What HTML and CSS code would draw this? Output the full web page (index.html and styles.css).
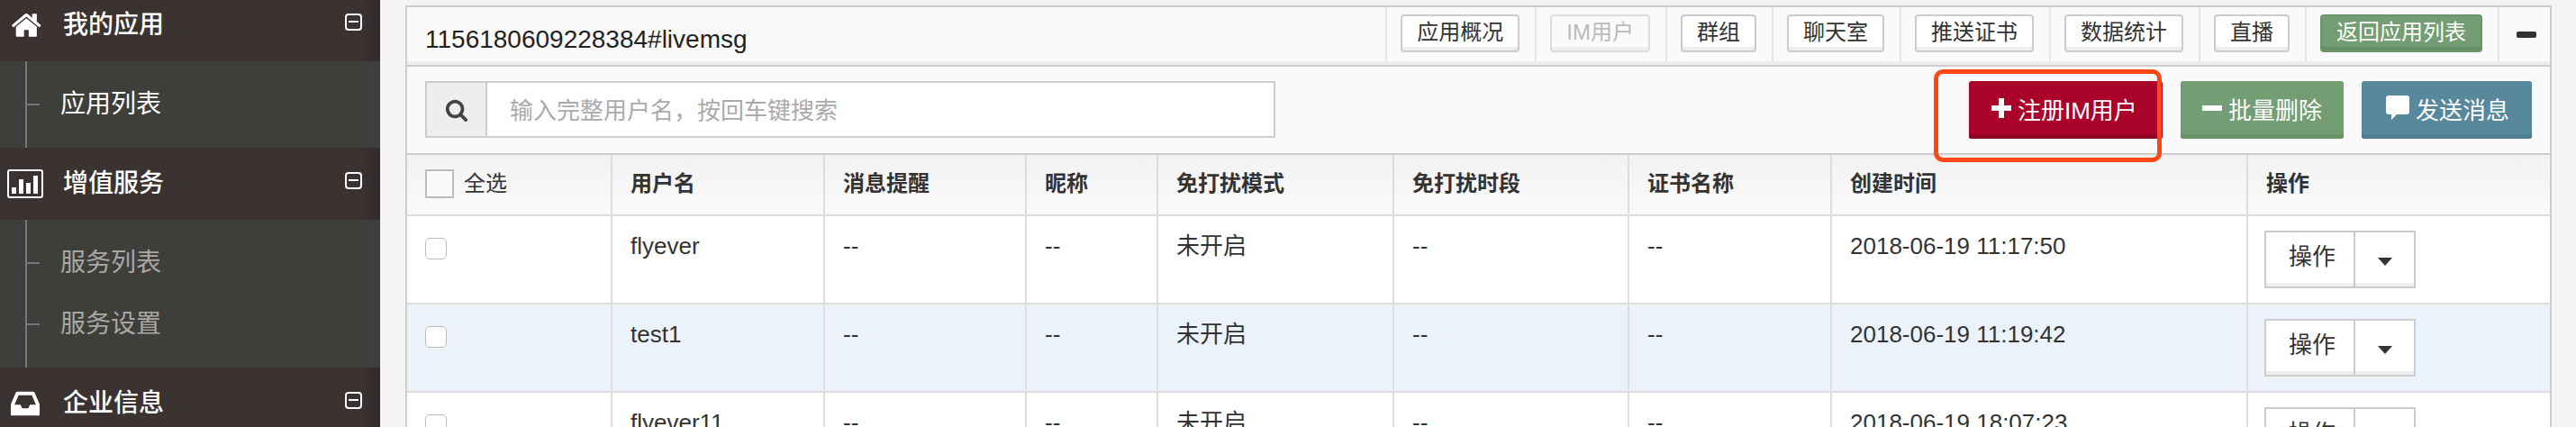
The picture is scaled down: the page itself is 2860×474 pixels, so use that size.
FILE: index.html
```html
<!DOCTYPE html>
<html>
<head>
    <title>IM用户</title>
    <link rel="stylesheet" href="styles.css">
</head>
<body>
    <div class="sidebar">
        <div class="navHead">
            <svg class="navIcon homeIcon" viewBox="0 0 1664 1792"><path d="M1472 992v480q0 26-19 45t-45 19h-384v-384h-256v384h-384q-26 0-45-19t-19-45v-480q0-1 .5-3t.5-3l575-474 575 474q1 2 1 6zm223-69l-62 74q-8 9-21 11h-3q-13 0-21-7l-692-577-692 577q-12 8-24 7-13-2-21-11l-62-74q-8-10-7-23.500t11-21.500l719-599q32-26 76-26t76 26l244 204v-195q0-14 9-23t23-9h192q14 0 23 9t9 23v408l219 182q10 8 11 21.500t-7 23.500z"/></svg>
            <span class="navTitle">我的应用</span>
            <span class="collapse"></span>
        </div>
        <div class="navSub">
            <div class="navItem active">应用列表</div>
        </div>
        <div class="navHead">
            <svg class="navIcon chartIcon" viewBox="0 0 40 32">
                <rect x="1" y="1" width="38" height="30" rx="2" class="chartFrame"/>
                <rect x="5" y="20" width="5" height="7"/>
                <rect x="13" y="11" width="5" height="16"/>
                <rect x="21" y="15" width="5" height="12"/>
                <rect x="29" y="7" width="5" height="20"/>
            </svg>
            <span class="navTitle">增值服务</span>
            <span class="collapse"></span>
        </div>
        <div class="navSub">
            <div class="navItem">服务列表</div>
            <div class="navItem">服务设置</div>
        </div>
        <div class="navHead">
            <svg class="navIcon inboxIcon" viewBox="0 0 1536 1792"><path d="M1023 960h316q-1-3-2.500-8.500t-2.500-7.500l-212-496h-708l-212 496q-1 3-2.500 8.500t-2.500 7.500h316l95 192h320zm513 30v482q0 26-19 45t-45 19h-1408q-26 0-45-19t-19-45v-482q0-62 25-123l238-552q10-25 36.500-42t52.500-17h832q26 0 52.500 17t36.500 42l238 552q25 61 25 123z"/></svg>
            <span class="navTitle">企业信息</span>
            <span class="collapse"></span>
        </div>
    </div>

    <div class="main">
        <div class="panel">
            <div class="topBar">
                <div class="appName">1156180609228384#livemsg</div>
                <div class="topCell"><a class="tabBtn">应用概况</a></div>
                <div class="topCell"><a class="tabBtn disabled">IM用户</a></div>
                <div class="topCell"><a class="tabBtn">群组</a></div>
                <div class="topCell"><a class="tabBtn">聊天室</a></div>
                <div class="topCell"><a class="tabBtn">推送证书</a></div>
                <div class="topCell"><a class="tabBtn">数据统计</a></div>
                <div class="topCell"><a class="tabBtn">直播</a></div>
                <div class="topCell"><a class="tabBtn back">返回应用列表</a></div>
                <div class="topCell minCell"><span class="minBar"></span></div>
            </div>

            <div class="actionBar">
                <div class="search">
                    <span class="searchAddon">
                        <svg class="searchIcon" viewBox="0 0 1792 1792"><path d="M1216 832q0-185-131.500-316.500t-316.500-131.500-316.500 131.500-131.500 316.500 131.500 316.500 316.500 131.500 316.500-131.500 131.500-316.500zm512 832q0 52-38 90t-90 38q-54 0-90-38l-343-342q-179 124-399 124-143 0-273.500-55.500t-225-150-150-225-55.500-273.500 55.500-273.500 150-225 225-150 273.500-55.500 273.500 55.500 225 150 150 225 55.500 273.500q0 220-124 399l343 343q37 37 37 90z"/></svg>
                    </span>
                    <input class="searchInput" type="text" placeholder="输入完整用户名，按回车键搜索">
                </div>
                <div class="actions">
                    <a class="actBtn red">
                        <svg class="btnIcon" viewBox="0 0 22 22"><path d="M8 0h6v8h8v6h-8v8H8v-8H0V8h8z"/></svg>注册IM用户
                    </a>
                    <a class="actBtn green">
                        <svg class="btnIcon" viewBox="0 0 22 22"><path d="M0 8h22v6H0z"/></svg>批量删除
                    </a>
                    <a class="actBtn blue">
                        <svg class="btnIcon msgIcon" viewBox="0 0 26 28"><path d="M3 0h20q3 0 3 3v15q0 3-3 3H12l-6 6v-6H3q-3 0-3-3V3q0-3 3-3z"/></svg>发送消息
                    </a>
                </div>
                <div class="highlight"></div>
            </div>

            <table class="userTable">
                <colgroup>
                    <col class="colCheck">
                    <col class="colName">
                    <col class="colNotify">
                    <col class="colNick">
                    <col class="colMode">
                    <col class="colPeriod">
                    <col class="colCert">
                    <col class="colTime">
                    <col class="colOps">
                </colgroup>
                <thead>
                    <tr>
                        <th class="checkHead"><span class="checkAll"></span><span class="checkLabel">全选</span></th>
                        <th>用户名</th>
                        <th>消息提醒</th>
                        <th>昵称</th>
                        <th>免打扰模式</th>
                        <th>免打扰时段</th>
                        <th>证书名称</th>
                        <th>创建时间</th>
                        <th>操作</th>
                    </tr>
                </thead>
                <tbody>
                    <tr>
                        <td class="checkCell"><span class="rowCheck"></span></td>
                        <td>flyever</td>
                        <td>--</td>
                        <td>--</td>
                        <td>未开启</td>
                        <td>--</td>
                        <td>--</td>
                        <td>2018-06-19 11:17:50</td>
                        <td class="opsCell"><div class="opBtn"><span class="opText">操作</span><span class="opCaret"></span></div></td>
                    </tr>
                    <tr class="stripe">
                        <td class="checkCell"><span class="rowCheck"></span></td>
                        <td>test1</td>
                        <td>--</td>
                        <td>--</td>
                        <td>未开启</td>
                        <td>--</td>
                        <td>--</td>
                        <td>2018-06-19 11:19:42</td>
                        <td class="opsCell"><div class="opBtn"><span class="opText">操作</span><span class="opCaret"></span></div></td>
                    </tr>
                    <tr>
                        <td class="checkCell"><span class="rowCheck"></span></td>
                        <td>flyever11</td>
                        <td>--</td>
                        <td>--</td>
                        <td>未开启</td>
                        <td>--</td>
                        <td>--</td>
                        <td>2018-06-19 18:07:23</td>
                        <td class="opsCell"><div class="opBtn"><span class="opText">操作</span><span class="opCaret"></span></div></td>
                    </tr>
                </tbody>
            </table>
        </div>
    </div>
</body>
</html>
```

FILE: styles.css
```css
* {
    box-sizing: border-box;
}

html, body {
    height: 474px;
    overflow: hidden;
}

body {
    display: flex;
    margin: 0;
    background: #f3f3f3;
    color: #333;
    font-family: "Liberation Sans", "Noto Sans CJK SC", sans-serif;
    font-size: 26px;
}

/* sidebar, the first header is scrolled off by 12px */
.sidebar {
    flex: 0 0 422px;
    margin-top: -12px;
}

.navHead {
    display: flex;
    align-items: center;
    height: 80px;
    background: linear-gradient(to right, #3a3331 95%, #2f2a28 100%);
    color: #fff;
    position: relative;
}

.navIcon {
    fill: #fff;
    flex: none;
}

.homeIcon {
    width: 36px;
    height: 36px;
    margin-left: 10px;
    margin-right: 24px;
}

.chartIcon {
    width: 40px;
    height: 32px;
    margin-left: 8px;
    margin-right: 22px;
}

.chartFrame {
    fill: none;
    stroke: #fff;
    stroke-width: 2;
}

.inboxIcon {
    width: 32px;
    height: 38px;
    margin-left: 12px;
    margin-right: 26px;
}

.navTitle {
    font-size: 28px;
    font-weight: 500;
    line-height: 36px;
}

.collapse {
    position: absolute;
    top: 27px;
    right: 20px;
    width: 19px;
    height: 19px;
    border: 2px solid #fff;
    border-radius: 4px;
}

.collapse::after {
    content: "";
    position: absolute;
    left: 2px;
    right: 2px;
    top: 6px;
    height: 2px;
    background: #fff;
}

.navSub {
    position: relative;
    padding: 14px 0;
    background: linear-gradient(to right, #3e3f3b 95%, #403e3e 100%);
}

.navSub::before {
    content: "";
    position: absolute;
    left: 28px;
    top: 0;
    bottom: 0;
    width: 2px;
    background: #777;
}

.navItem {
    position: relative;
    height: 68px;
    padding-left: 67px;
    line-height: 68px;
    font-size: 28px;
    color: #aaa7a4;
}

.navItem.active {
    color: #fff;
}

.navItem::before {
    content: "";
    position: absolute;
    left: 30px;
    top: 33px;
    width: 14px;
    height: 2px;
    background: #777;
}

/* main panel */
.main {
    flex: 1;
    padding: 6px 27px 0 28px;
    min-width: 0;
}

.panel {
    border: 2px solid #ccc;
    border-bottom: 0;
    background: #fafafa;
    height: 480px;
}

.topBar {
    display: flex;
    height: 66px;
    border-bottom: 2px solid #ccc;
    box-shadow: inset 0 -4px 0 #eee;
}

.appName {
    flex: 1;
    padding: 18px 0 0 20px;
    font-size: 28px;
    line-height: 36px;
    color: #222;
}

.topCell {
    display: flex;
    align-items: center;
    height: 60px;
    padding: 0 17px 2px 15px;
    border-left: 2px solid #e6e6e6;
}

.tabBtn {
    display: block;
    height: 42px;
    padding: 0 16px;
    border: 2px solid #ccc;
    border-radius: 4px;
    background: #fff;
    box-shadow: inset 0 -4px 0 #eee;
    font-size: 24px;
    line-height: 36px;
    color: #333;
}

.tabBtn.disabled {
    color: #bbb;
    border-color: #ddd;
    background: #fafafa;
}

.tabBtn.back {
    background: #739e73;
    border-color: #6b946b;
    box-shadow: inset 0 -4px 0 #659065;
    color: #fff;
}

.minCell {
    flex: 0 0 58px;
    padding: 0 0 0 19px;
}

.minBar {
    width: 22px;
    height: 7px;
    border-radius: 2px;
    background: #333;
}

.actionBar {
    display: flex;
    align-items: flex-start;
    justify-content: space-between;
    position: relative;
    height: 96px;
    padding: 16px 20px 0;
}

.search {
    display: flex;
    width: 944px;
    height: 63px;
    border: 2px solid #ccc;
    background: #fff;
}

.searchAddon {
    display: flex;
    align-items: center;
    justify-content: center;
    flex: 0 0 67px;
    background: #eee;
    border-right: 2px solid #ccc;
}

.searchIcon {
    width: 26px;
    height: 26px;
    fill: #444;
}

.searchInput {
    flex: 1;
    border: 0;
    outline: 0;
    padding: 3px 0 0 25px;
    font-family: inherit;
    font-size: 26px;
}

.searchInput::placeholder {
    color: #aaa;
}

.actions {
    display: flex;
    gap: 20px;
}

.actBtn {
    display: flex;
    align-items: center;
    height: 64px;
    padding: 0 25px 4px;
    border-radius: 3px;
    color: #fff;
    font-size: 26px;
}

.red {
    width: 215px;
    background: #a90329;
    box-shadow: inset 0 -5px 0 #8f0222;
}

.green {
    padding-left: 24px;
    padding-right: 24px;
    background: #739e73;
    box-shadow: inset 0 -5px 0 #689268;
}

.blue {
    padding-left: 27px;
    background: #57889c;
    box-shadow: inset 0 -5px 0 #4f7d90;
}

.btnIcon {
    width: 22px;
    height: 22px;
    margin-right: 7px;
    fill: #fff;
}

.msgIcon {
    width: 26px;
    height: 28px;
}

.highlight {
    position: absolute;
    left: 1695px;
    top: 3px;
    width: 253px;
    height: 103px;
    border: 5px solid #ff4716;
    border-radius: 10px;
    pointer-events: none;
}

/* user table */
.userTable {
    width: 2379px;
    table-layout: fixed;
    border-collapse: separate;
    border-spacing: 0;
    border-top: 2px solid #ccc;
}

.colCheck { width: 228px; }
.colName { width: 236px; }
.colNotify { width: 224px; }
.colNick { width: 146px; }
.colMode { width: 262px; }
.colPeriod { width: 261px; }
.colCert { width: 225px; }
.colTime { width: 462px; }
.colOps { width: 335px; }

.userTable th,
.userTable td {
    border-right: 2px solid #ddd;
    vertical-align: top;
    text-align: left;
}

.userTable th:last-child,
.userTable td:last-child {
    border-right: 0;
}

.userTable th {
    height: 68px;
    padding: 15px 0 0 20px;
    border-bottom: 2px solid #ddd;
    background: linear-gradient(to bottom, #f2f2f2, #fafafa);
    font-size: 24px;
    line-height: 34px;
    font-weight: bold;
}

.userTable td {
    height: 98px;
    padding: 15px 0 0 20px;
    border-bottom: 2px solid #ddd;
    background: #fff;
    font-size: 26px;
    line-height: 36px;
}

.userTable .stripe td {
    background: #ebf2f9;
}

.checkHead {
    position: relative;
}

.checkAll {
    position: absolute;
    left: 20px;
    top: 16px;
    width: 32px;
    height: 32px;
    border: 2px solid #bbb;
    background: #fafafa;
}

.checkLabel {
    padding-left: 43px;
    font-weight: normal;
}

.userTable .checkCell {
    padding-top: 24px;
}

.rowCheck {
    display: block;
    width: 24px;
    height: 24px;
    border: 1px solid #bbb;
    border-radius: 5px;
    background: #fff;
}

.userTable .opsCell {
    padding: 16px 0 0 18px;
}

.opBtn {
    display: flex;
    width: 168px;
    height: 64px;
    border: 2px solid #ccc;
    background: #fff;
    box-shadow: inset 0 -4px 0 #eee;
}

.opText {
    flex: 0 0 99px;
    padding: 9px 0 0 25px;
    border-right: 2px solid #ccc;
}

.opCaret {
    width: 0;
    height: 0;
    margin: 28px 0 0 25px;
    border-top: 9px solid #333;
    border-left: 8px solid transparent;
    border-right: 8px solid transparent;
}
```
